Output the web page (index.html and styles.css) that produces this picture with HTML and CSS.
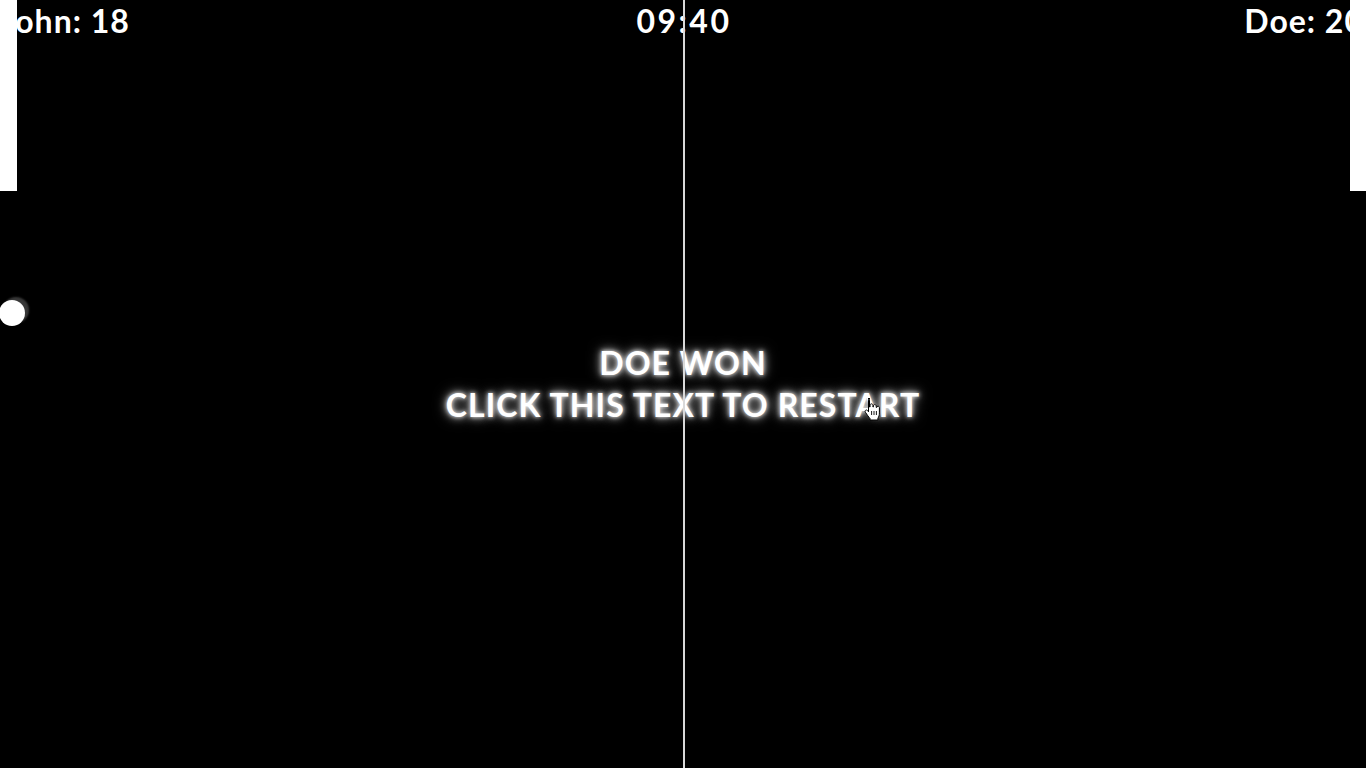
FILE: index.html
```html
<!DOCTYPE html>
<html lang="en">
<head>
<meta charset="utf-8">
<title>Pong</title>
<link rel="stylesheet" href="styles.css">
</head>
<body>
<div class="game">
  <div class="net"></div>
  <header class="hud">
    <span class="score score-left">John: 18</span>
    <span class="timer">09:40</span>
    <span class="score score-right">Doe: 20</span>
  </header>
  <div class="paddle paddle-left"></div>
  <div class="paddle paddle-right"></div>
  <div class="ball"></div>
  <div class="message">
    <div class="msg-line">DOE WON</div>
    <div class="msg-line">CLICK THIS TEXT TO RESTART</div>
  </div>
  <svg class="cursor" width="18" height="24" viewBox="0 0 18 24">
    <path d="M5 1.5c.9 0 1.5.7 1.5 1.6V10l.6-.1V8.3c0-.9.6-1.5 1.4-1.5s1.4.6 1.4 1.5v1.6l.5.1V9.1c0-.9.6-1.5 1.4-1.5s1.4.6 1.4 1.5v1.3l.5.1c0-.8.6-1.3 1.3-1.3.8 0 1.4.6 1.4 1.500v5.2c0 2.6-.6 3.9-1.5 5.3v1.8H7v-1.6c-1.2-1.2-3-3.700-4.6-6.2-.5-.8-.3-1.6.3-2 .7-.4 1.4-.2 1.9.4l.9 1.2V3.1c0-.9.6-1.6 1.5-1.6z" fill="#fff" stroke="#000" stroke-width="1" stroke-linejoin="round"/>
    <path d="M8.6 14v4M11 14v4M13.4 14v4" stroke="#000" stroke-width="0.9"/>
  </svg>
</div>
</body>
</html>
```

FILE: styles.css
```css
* { box-sizing: border-box; }
html, body {
  margin: 0;
  padding: 0;
  background: #000;
}
.game {
  position: relative;
  width: 1366px;
  height: 768px;
  overflow: hidden;
  background: #000;
  color: #fff;
  font-family: "Lato", "Inter", "Liberation Sans", sans-serif;
  font-weight: 700;
  display: flex;
  align-items: center;
  justify-content: center;
}
.net {
  position: absolute;
  left: 683px;
  top: 0;
  width: 2px;
  height: 768px;
  background: #d9d9d9;
  z-index: 3;
}
.hud {
  position: absolute;
  top: 0;
  left: 0;
  right: 0;
  display: flex;
  justify-content: space-between;
  align-items: flex-start;
  padding: 0 2px 0 1px;
  font-size: 32px;
  line-height: 42px;
  letter-spacing: 1px;
  z-index: 1;
}
.timer {
  position: absolute;
  left: 0;
  right: 0;
  text-align: center;
  letter-spacing: 2.5px;
  padding-left: 2px;
}
.paddle {
  position: absolute;
  top: 0;
  width: 17px;
  height: 191px;
  background: #fff;
  z-index: 2;
}
.paddle-left { left: 0; }
.paddle-right { right: 0; width: 16px; }
.ball {
  position: absolute;
  left: -1px;
  top: 300px;
  width: 26px;
  height: 26px;
  border-radius: 50%;
  background: #fff;
  box-shadow: 4px -3px 2px rgba(255, 255, 255, 0.22);
  z-index: 2;
}
.message {
  display: flex;
  flex-direction: column;
  align-items: center;
  font-size: 32px;
  line-height: 42px;
  letter-spacing: 1.1px;
  cursor: pointer;
  text-shadow: 0 0 4px rgba(255,255,255,0.9), 0 0 8px rgba(255,255,255,0.7), 0 0 14px rgba(255,255,255,0.5);
  z-index: 1;
}
.cursor {
  position: absolute;
  left: 863px;
  top: 397px;
  z-index: 5;
}
```
